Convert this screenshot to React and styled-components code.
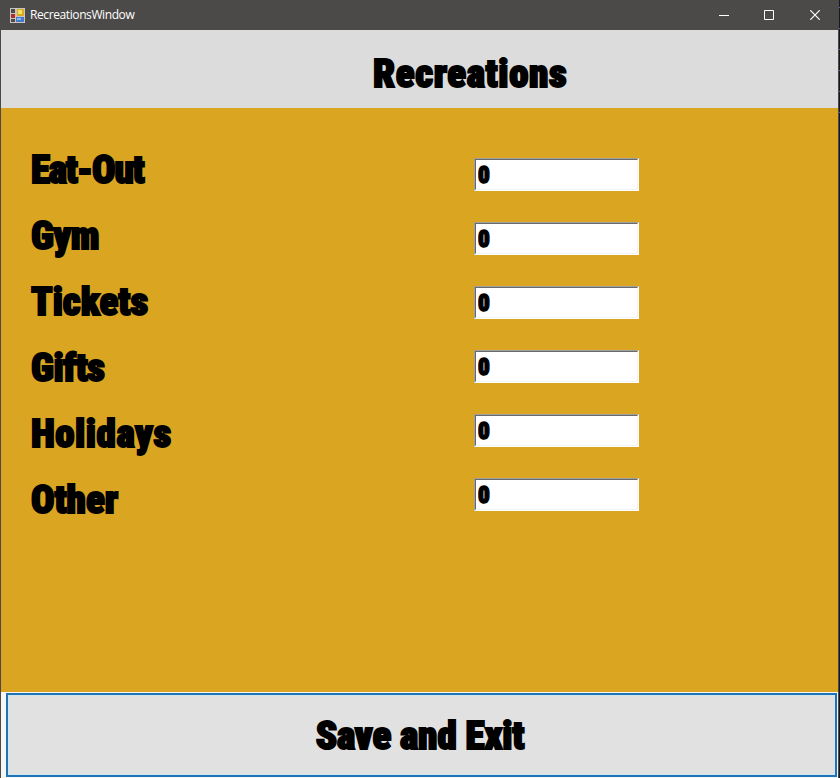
import React from 'react';
import styled, { createGlobalStyle } from 'styled-components';

const GlobalStyle = createGlobalStyle`
  * { box-sizing: border-box; }
  body { margin: 0; overflow: hidden; background: #17181e; }
`;

const Desktop = styled.div`
  display: flex;
  width: 840px;
  height: 778px;
  background: repeating-linear-gradient(#17181e 0 7px, #5a62a8 7px 8px, #17181e 8px 21px) 0 0 / 100% 120px no-repeat #17181e;
`;

const Window = styled.main`
  display: flex;
  flex-direction: column;
  width: 839px;
  height: 778px;
  border: solid #4c4a48;
  border-width: 0 1px;
  background: #f0f0f0;
`;

const TitleBar = styled.header`
  display: flex;
  align-items: center;
  flex: 0 0 30px;
  padding-left: 9px;
  background: #4c4a48;
  color: #fff;
`;

const WindowName = styled.span`
  flex: 1;
  margin-left: 5px;
  font: 12px/30px "Open Sans", sans-serif;
  letter-spacing: -0.4px;
`;

const WindowButton = styled.button`
  display: grid;
  place-items: center;
  width: 46px;
  height: 29px;
  padding: 0;
  border: 0;
  background: none;
`;

const Heavy = styled.span`
  color: #000;
  font-family: Roboto, Impact, sans-serif;
  font-size: 39px;
  font-weight: 900;
  font-stretch: 75%;
  letter-spacing: ${(p) => p.$spacing || 0}px;
  white-space: nowrap;
  -webkit-text-stroke: 1.9px #000;
`;

const Banner = styled.section`
  display: flex;
  flex: 0 0 78px;
  padding: 11px 0 0 372px;
  background: #dcdcdc;
  line-height: 66px;
`;

const Form = styled.section`
  display: grid;
  grid-template-columns: 443px 165px;
  align-content: start;
  flex: 0 0 584px;
  padding: 28px 0 0 30px;
  background: #daa520;
`;

const Labels = styled.div`
  display: flex;
  flex-direction: column;
  padding-top: 1px;
  line-height: 66px;
`;

const Fields = styled.div`
  display: flex;
  flex-direction: column;
  gap: 31px;
  padding-top: 22px;
`;

const FieldFrame = styled.div`
  height: 33px;
  border: 1px solid;
  border-color: #a0a0a0 #fff #fff #a0a0a0;
`;

const Field = styled.input`
  display: block;
  width: 100%;
  height: 31px;
  padding: 2px 0 0 2px;
  border: 1px solid;
  border-color: #696969 #f3f3f3 #f3f3f3 #696969;
  outline: 0;
  background: #fff;
  color: #000;
  font: 900 23px/27px Roboto, Impact, sans-serif;
  font-stretch: 75%;
  -webkit-text-stroke: 1.5px #000;
`;

const Footer = styled.footer`
  flex: 1;
  padding: 1px 1px 1px 5px;
  background: #f6f6f6;
`;

const SaveButton = styled.button`
  display: block;
  width: 100%;
  height: 84px;
  padding: 2px 3px 0 0;
  border: 2px solid #1f74b5;
  box-shadow: inset 0 0 0 1px #cfe6f5;
  background: #e1e1e1;
  line-height: 78px;
`;

const items = [
  ['Eat-Out', -1.2],
  ['Gym', -0.7],
  ['Tickets', 0],
  ['Gifts', -0.5],
  ['Holidays', 0.55],
  ['Other', -0.05],
];

function FormIcon() {
  return (
    <svg width="15" height="15" viewBox="0 0 15 15" shapeRendering="crispEdges">
      <path fill="#c9c5c1" d="M0 0h15v15H0z" />
      <path fill="#4b4b4b" d="M1 1h4v4H1zM1 11h4v3H1z" />
      <path fill="#b32c25" d="M1 6h4v4H1z" />
      <path fill="#d9a91f" d="M7 1h7v7H7z" />
      <path fill="#f6e25c" d="M8 2h4v4H8z" />
      <path fill="#4679c8" d="M6 9h8v5H6z" />
      <path fill="#8fb6ec" d="M7 10h4v2H7z" />
    </svg>
  );
}

export default function App() {
  return (
    <Desktop>
      <GlobalStyle />
      <Window>
        <TitleBar>
          <FormIcon />
          <WindowName>RecreationsWindow</WindowName>
          <WindowButton aria-label="Minimize">
            <svg width="12" height="10"><path d="M2 5.5h10" stroke="#fff" /></svg>
          </WindowButton>
          <WindowButton aria-label="Maximize">
            <svg width="10" height="10"><path d="M.5.5h9v9h-9z" fill="none" stroke="#fff" /></svg>
          </WindowButton>
          <WindowButton aria-label="Close">
            <svg width="10" height="10"><path d="M.2.2l9.6 9.6M9.8.2L.2 9.8" stroke="#fff" strokeWidth="1.2" /></svg>
          </WindowButton>
        </TitleBar>
        <Banner><Heavy $spacing={0.6}>Recreations</Heavy></Banner>
        <Form>
          <Labels>
            {items.map(([name, spacing]) => <Heavy key={name} $spacing={spacing}>{name}</Heavy>)}
          </Labels>
          <Fields>
            {items.map(([name]) => (
              <FieldFrame key={name}><Field aria-label={name} defaultValue="0" /></FieldFrame>
            ))}
          </Fields>
        </Form>
        <Footer><SaveButton><Heavy $spacing={-0.1}>Save and Exit</Heavy></SaveButton></Footer>
      </Window>
    </Desktop>
  );
}
